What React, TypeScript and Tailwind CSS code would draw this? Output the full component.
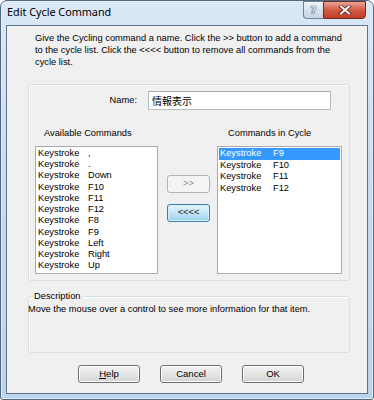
import React from "react";

const available = [",", ".", "Down", "F10", "F11", "F12", "F8", "F9", "Left", "Right", "Up"];
const cycle = ["F9", "F10", "F11", "F12"];

function Btn({ children, className = "" }: { children: React.ReactNode; className?: string }) {
  return (
    <div
      className={`flex h-[18px] w-[62px] items-center justify-center rounded-[3px] border border-[#707070] bg-gradient-to-b from-[#f2f2f2] via-[#e6e6e6] to-[#d2d2d2] text-[9.5px] text-black shadow-[inset_0_0_0_1px_#fcfcfc] ${className}`}
    >
      {children}
    </div>
  );
}

export default function App() {
  return (
    <div
      className="h-[400px] w-[374px] bg-white"
      style={{ fontFamily: '"Liberation Sans", Arial, sans-serif' }}
    >
      <div className="flex h-full w-full flex-col rounded-t-[7px] rounded-b-[3px] border border-[#52687f] bg-gradient-to-b from-[#dbe8f6] via-[#c5d9ef] to-[#bcd3ec] px-[5px] pb-[5px] shadow-[inset_0_0_0_1px_#e4eef9]">
        {/* Title bar */}
        <div className="flex h-[24px] items-start">
          <span
            className="mt-[4px] pl-[1px] text-[10.8px] leading-[14px] text-black"
            style={{ fontFamily: '"Noto Sans", sans-serif' }}
          >
            Edit Cycle Command
          </span>
          <div className="ml-auto mr-[2px] flex">
            <div className="flex h-[18px] w-[20px] items-center justify-center rounded-bl-[4px] border border-r-0 border-[#6e829a] bg-gradient-to-b from-[#eef3f9] via-[#d9e3ee] to-[#c4d3e4]">
              <span
                className="text-[11px] font-bold leading-none text-[#dfe6ee] [text-shadow:0_0_1px_#1d2b3a,0_0_1px_#1d2b3a]"
                style={{ fontFamily: '"DejaVu Sans", sans-serif' }}
              >
                ?
              </span>
            </div>
            <div className="flex h-[18px] w-[43px] items-center justify-center rounded-br-[4px] border border-[#6b2b22] bg-gradient-to-b from-[#e9a395] via-[#d45a45] to-[#c23d28]">
              <svg width="14" height="10" viewBox="0 0 14 10">
                <path d="M3 1.5 L11 8.5 M11 1.5 L3 8.5" stroke="#5a1a12" strokeWidth="3.6" strokeLinecap="square" />
                <path d="M3 1.5 L11 8.5 M11 1.5 L3 8.5" stroke="#ffffff" strokeWidth="2" strokeLinecap="square" />
              </svg>
            </div>
          </div>
        </div>

        {/* Client area */}
        <div className="flex flex-1 flex-col border border-[#60758b] bg-[#f0f0f0] text-[9.3px] text-black">
          <p className="ml-[28px] mt-[6px] whitespace-nowrap leading-[12px]">
            Give the Cycling command a name. Click the &gt;&gt; button to add a command
            <br />
            to the cycle list. Click the &lt;&lt;&lt;&lt; button to remove all commands from the
            <br />
            cycle list.
          </p>

          {/* Main group */}
          <div className="ml-[21px] mt-[16px] flex h-[197px] w-[322px] flex-col rounded-[3px] border border-[#d5dfe5] shadow-[inset_1px_1px_0_#ffffff]">
            <div className="mt-[6px] flex h-[19px] items-center">
              <span className="w-[108px] text-right">Name:</span>
              <div className="ml-[11px] flex h-[19px] w-[183px] items-center border border-[#b5bcc4] border-t-[#abadb3] bg-white pl-[3px]">
                <span
                  className="text-[10px] leading-none"
                  style={{ fontFamily: '"Noto Sans CJK JP", "Noto Sans", sans-serif' }}
                >
                  情報表示
                </span>
              </div>
            </div>

            <div className="mt-[18px] flex h-[12px] items-center">
              <span className="w-[199px] pl-[15px]">Available Commands</span>
              <span>Commands in Cycle</span>
            </div>

            <div className="mt-[6px] flex">
              <div className="ml-[6px] h-[128px] w-[123px] border border-[#a9abb0] bg-white pt-[1px]">
                {available.map((v) => (
                  <div key={v} className="flex h-[11.25px] items-center leading-none">
                    <span className="w-[52px] pl-[2px]">Keystroke</span>
                    <span>{v}</span>
                  </div>
                ))}
              </div>

              <div className="ml-[9px] flex w-[43px] flex-col pt-[29px]">
                <div className="flex h-[18px] items-center justify-center rounded-[3px] border border-[#b0b4b8] bg-[#f4f4f4] text-[#8a8a8a]">
                  &gt;&gt;
                </div>
                <div className="mt-[11px] flex h-[18px] items-center justify-center rounded-[3px] border border-[#3c7fb1] bg-gradient-to-b from-[#e5f4fc] via-[#c4e5f6] to-[#98d1ef] text-[#1a1a1a] shadow-[inset_0_0_0_1px_#d8f0fb]">
                  &lt;&lt;&lt;&lt;
                </div>
              </div>

              <div className="ml-[7px] h-[128px] w-[125px] border border-[#a9abb0] bg-white pt-[1px]">
                {cycle.map((v, i) => (
                  <div
                    key={v}
                    className={`mx-[1px] flex h-[11.5px] items-center leading-none ${
                      i === 0 ? "bg-[#3399ff] text-white" : "text-black"
                    }`}
                  >
                    <span className="w-[54px] pl-[1px]">Keystroke</span>
                    <span>{v}</span>
                  </div>
                ))}
              </div>
            </div>
          </div>

          {/* Description group */}
          <div className="relative ml-[21px] mt-[15px] h-[57px] w-[322px] rounded-[3px] border border-[#d5dfe5] shadow-[inset_1px_1px_0_#ffffff]">
            <span className="absolute left-[4px] top-[-7px] bg-[#f0f0f0] px-[1px] leading-[12px]">
              Description
            </span>
            <p className="-ml-[1px] mt-[6px] whitespace-nowrap leading-[12px]">
              Move the mouse over a control to see more information for that item.
            </p>
          </div>

          {/* Buttons */}
          <div className="ml-[71px] mt-[12px] flex gap-[20px]">
            <Btn>
              <span>
                <span className="underline">H</span>elp
              </span>
            </Btn>
            <Btn>Cancel</Btn>
            <Btn>OK</Btn>
          </div>
        </div>
      </div>
    </div>
  );
}
